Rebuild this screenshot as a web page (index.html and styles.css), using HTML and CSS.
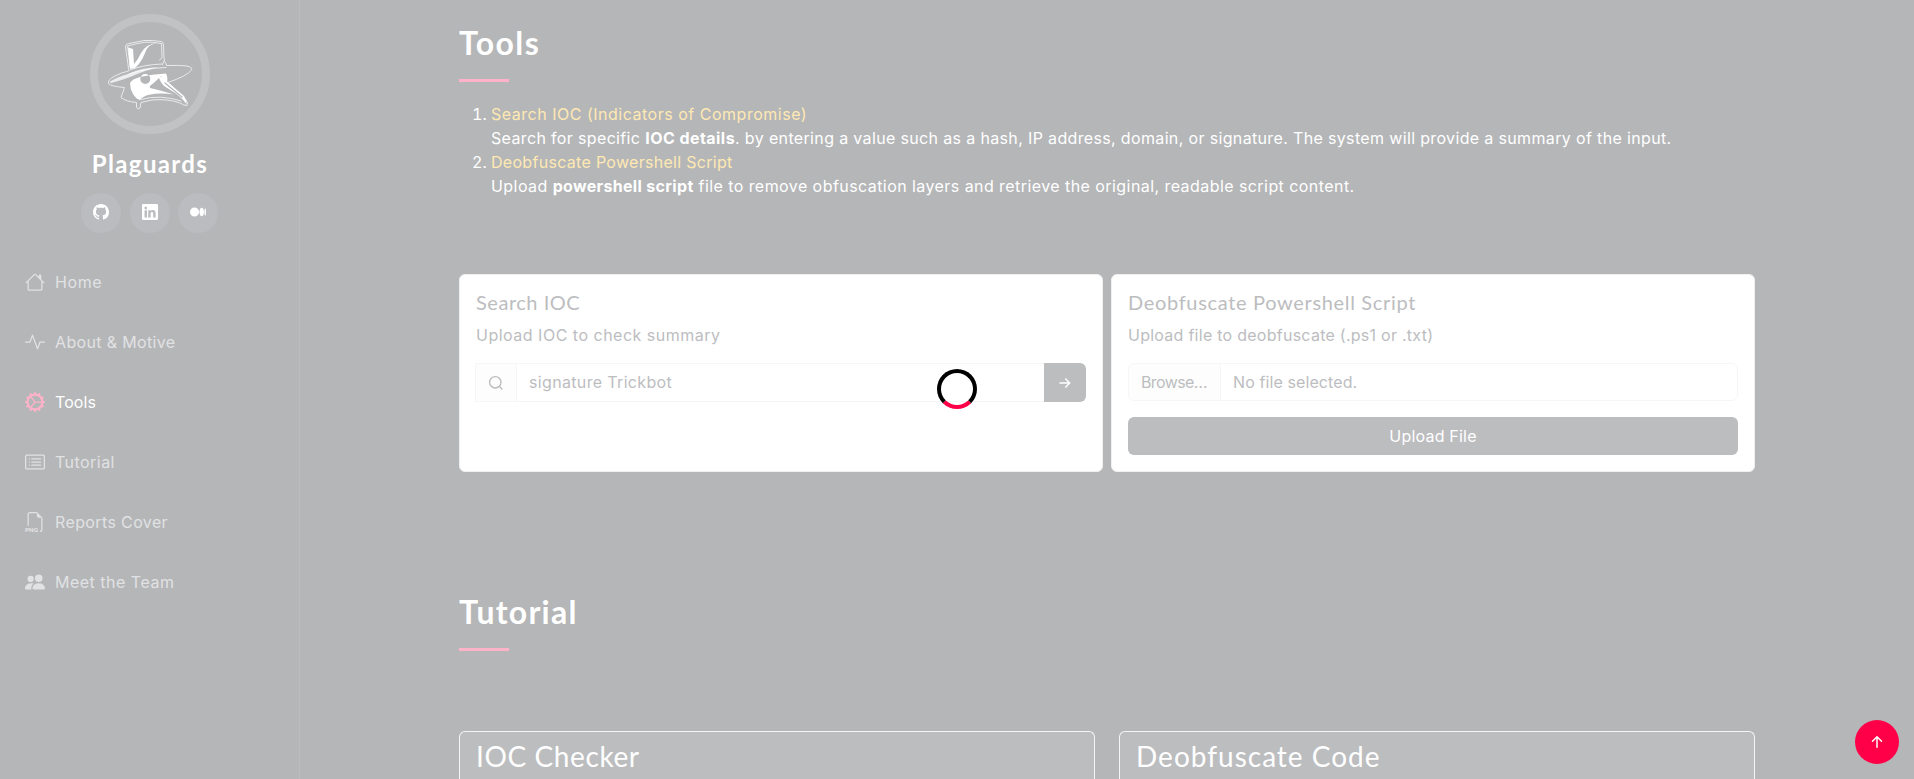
FILE: index.html
```
<!DOCTYPE html>
<html lang="en">
<head>
<meta charset="utf-8">
<title>Plaguards</title>
<link rel="stylesheet" href="styles.css">
</head>
<body>
<aside class="sidebar">
  <div class="avatar">
    <svg viewBox="0 0 140 140" width="140" height="140" fill="none" stroke-linejoin="round" stroke-linecap="round">
      <g stroke="#e9eaeb" stroke-width="1">
        <path d="M48.500 64.500C47.500 57 46.500 50 45.500 43Q45.300 40.500 48 39.800 56 38 64 36.500 73 36 81 37.500 83.500 38 83.500 41L84 54Q84 58 86 59.500L86.500 61.500Q98 61 107 62Q113 63.500 111.500 66 107 72 88 78.500L90 80.500 106 96Q108.500 99.500 107 101.500 104 101.500 100 99 88 94.500 72 96L61 98.500 60 104Q58 106 56.500 103.500L56.500 98.500Q46 97.500 41 93.500L44.500 83.500Q31 82.500 28.500 79.500 27.500 76 34 72.500Q41 68.500 48.500 67Z"/>
        <path d="M50 63Q49 52 47.500 42Q56 39.500 65 38.200 73 37.800 81.500 39.500L82 54 79.500 56M84 57 82.500 60.500M49 70Q63 64.500 86 63.500M50 66Q64 60.500 82 60M61 95.500Q80 90 101 97"/>
      </g>
      <g fill="#fff">
        <path d="M48 43.500 53 45 54 60Q58 56 61 49 66 40 77 38.700L71 41Q67 43 65 49 61 59 55 64L50 65Z"/>
        <path fill-rule="evenodd" d="M50 79Q52 75 60 73 72 70 86 69.500Q88 73 87 79L83 75 81 72 78 75Q74 79 71 81 69 82.500 70 84 80 86 94 90.500 80 88.500 68 91 62 93 60 96 56 95 53 90 50 85 50 79ZM65.300 70A5 5 0 1 0 65.300 80A5 5 0 0 0 65.300 70Z"/>
        <path d="M78 71 83 74 104 92Q107 96 106.500 100 103 95 96 89.500L84 82Q80 78 78 71Z"/>
        <path d="M48 70Q62 63.500 79 63 65 66.500 55 71 46 75 31 79L29.500 78Q36 73.500 48 70Z" opacity=".75"/>
      </g>
      <path d="M85 79 102 93" stroke="#b5b6b8" stroke-width="1.200"/>
    </svg>
  </div>
  <h1 class="brand">Plaguards</h1>
  <div class="social">
    <a><svg viewBox="0 0 16 16"><path d="M8 0C3.58 0 0 3.58 0 8c0 3.54 2.29 6.53 5.47 7.59.4.07.55-.17.55-.38 0-.19-.01-.82-.01-1.49-2.01.37-2.53-.49-2.69-.94-.09-.23-.48-.94-.82-1.13-.28-.15-.68-.52-.01-.53.63-.01 1.08.58 1.23.82.72 1.21 1.87.87 2.33.66.07-.52.28-.87.51-1.07-1.78-.2-3.64-.89-3.64-3.95 0-.87.31-1.59.82-2.15-.08-.2-.36-1.02.08-2.12 0 0 .67-.21 2.2.82.64-.18 1.32-.27 2-.27s1.36.09 2 .27c1.53-1.04 2.2-.82 2.2-.82.44 1.1.16 1.92.08 2.12.51.56.82 1.27.82 2.15 0 3.07-1.87 3.75-3.65 3.95.29.25.54.73.54 1.48 0 1.07-.01 1.93-.01 2.2 0 .21.15.46.55.38A8.01 8.01 0 0 0 16 8c0-4.42-3.58-8-8-8"/></svg></a>
    <a><svg viewBox="0 0 16 16"><path d="M0 1.146C0 .513.526 0 1.175 0h13.65C15.474 0 16 .513 16 1.146v13.708c0 .633-.526 1.146-1.175 1.146H1.175C.526 16 0 15.487 0 14.854zm4.943 12.248V6.169H2.542v7.225zm-1.2-8.212c.837 0 1.358-.554 1.358-1.248-.015-.709-.52-1.248-1.342-1.248S2.4 3.226 2.4 3.934c0 .694.521 1.248 1.327 1.248zm4.908 8.212V9.359c0-.216.016-.432.08-.586.173-.431.568-.878 1.232-.878.869 0 1.216.662 1.216 1.634v3.865h2.401V9.25c0-2.22-1.184-3.252-2.764-3.252-1.274 0-1.845.7-2.165 1.193v.025h-.016l.016-.025V6.169h-2.4c.03.678 0 7.225 0 7.225z"/></svg></a>
    <a><svg viewBox="0 0 16 16"><path d="M9.025 8c0 2.485-2.02 4.5-4.513 4.5A4.506 4.506 0 0 1 0 8c0-2.486 2.02-4.5 4.512-4.5A4.506 4.506 0 0 1 9.025 8m4.95 0c0 2.34-1.01 4.236-2.256 4.236S9.463 10.339 9.463 8c0-2.34 1.01-4.236 2.256-4.236S13.975 5.661 13.975 8M16 8c0 2.096-.355 3.795-.794 3.795-.438 0-.793-1.7-.793-3.795 0-2.096.355-3.795.794-3.795.438 0 .793 1.699.793 3.795"/></svg></a>
  </div>
  <nav class="nav">
    <a><svg viewBox="0 0 16 16"><path d="M8.707 1.5a1 1 0 0 0-1.414 0L.646 8.146a.5.5 0 0 0 .708.708L2 8.207V13.5A1.5 1.5 0 0 0 3.5 15h9a1.5 1.5 0 0 0 1.5-1.5V8.207l.646.647a.5.5 0 0 0 .708-.708L13 5.793V2.5a.5.5 0 0 0-.5-.5h-1a.5.5 0 0 0-.5.5v1.293zM13 7.207V13.5a.5.5 0 0 1-.5.5h-9a.5.5 0 0 1-.5-.5V7.207l5-5z"/></svg><span class="n1">Home</span></a>
    <a><svg viewBox="0 0 16 16"><path d="M6 2a.5.5 0 0 1 .47.33L10 12.036l1.53-4.208A.5.5 0 0 1 12 7.5h3.5a.5.5 0 0 1 0 1h-3.15l-1.88 5.17a.5.5 0 0 1-.94 0L6 3.964 4.47 8.171A.5.5 0 0 1 4 8.5H.5a.5.5 0 0 1 0-1h3.15l1.88-5.17A.5.5 0 0 1 6 2"/></svg><span class="n2">About &amp; Motive</span></a>
    <a class="active"><svg viewBox="0 0 16 16"><path d="M7.068.727c.243-.97 1.62-.97 1.864 0l.071.286a.96.96 0 0 0 1.622.434l.205-.211c.695-.719 1.888-.03 1.613.931l-.08.284a.96.96 0 0 0 1.187 1.187l.283-.081c.96-.275 1.65.918.931 1.613l-.211.205a.96.96 0 0 0 .434 1.622l.286.071c.97.243.97 1.62 0 1.864l-.286.071a.96.96 0 0 0-.434 1.622l.211.205c.719.695.03 1.888-.931 1.613l-.284-.08a.96.96 0 0 0-1.187 1.187l.081.283c.275.96-.918 1.65-1.613.931l-.205-.211a.96.96 0 0 0-1.622.434l-.071.286c-.243.97-1.62.97-1.864 0l-.071-.286a.96.96 0 0 0-1.622-.434l-.205.211c-.695.719-1.888.03-1.613-.931l.08-.284a.96.96 0 0 0-1.186-1.187l-.284.081c-.96.275-1.65-.918-.931-1.613l.211-.205a.96.96 0 0 0-.434-1.622l-.286-.071c-.97-.243-.97-1.62 0-1.864l.286-.071a.96.96 0 0 0 .434-1.622l-.211-.205c-.719-.695-.03-1.888.931-1.613l.284.08a.96.96 0 0 0 1.187-1.186l-.081-.284c-.275-.96.918-1.65 1.613-.931l.205.211a.96.96 0 0 0 1.622-.434zM12.973 8.5H8.25l-2.834 3.779A4.998 4.998 0 0 0 12.973 8.5m0-1a4.998 4.998 0 0 0-7.557-3.779l2.834 3.78zM5.048 3.967l-.087.065zm-.431.355A4.98 4.98 0 0 0 3.002 8c0 1.455.622 2.765 1.615 3.678L7.375 8zm.344 7.646.087.065z"/></svg><span class="n3">Tools</span></a>
    <a><svg viewBox="0 0 16 16"><path d="M14.5 3a.5.5 0 0 1 .5.5v9a.5.5 0 0 1-.5.5h-13a.5.5 0 0 1-.5-.5v-9a.5.5 0 0 1 .5-.5zm-13-1A1.5 1.5 0 0 0 0 3.5v9A1.5 1.5 0 0 0 1.5 14h13a1.5 1.5 0 0 0 1.5-1.5v-9A1.5 1.5 0 0 0 14.5 2z"/><path d="M5 8a.5.5 0 0 1 .5-.5h7a.5.5 0 0 1 0 1h-7A.5.5 0 0 1 5 8m0-2.500a.5.5 0 0 1 .5-.5h7a.5.5 0 0 1 0 1h-7a.5.5 0 0 1-.5-.5m0 5a.5.5 0 0 1 .5-.5h7a.5.5 0 0 1 0 1h-7a.5.5 0 0 1-.5-.5m-1-5a.5.5 0 1 1-1 0 .5.5 0 0 1 1 0M4 8a.5.5 0 1 1-1 0 .5.5 0 0 1 1 0m0 2.500a.5.5 0 1 1-1 0 .5.5 0 0 1 1 0"/></svg><span class="n4">Tutorial</span></a>
    <a><svg viewBox="0 0 16 16"><path d="M14 4.500V14a2 2 0 0 1-2 2v-1a1 1 0 0 0 1-1V4.500h-2A1.500 1.500 0 0 1 9.500 3V1H4a1 1 0 0 0-1 1v9H2V2a2 2 0 0 1 2-2h5.500z"/><text class="ext" x="-.1" y="15.900" textLength="10.600" lengthAdjust="spacingAndGlyphs">PNG</text></svg><span class="n5">Reports Cover</span></a>
    <a><svg viewBox="0 0 16 16"><path d="M7 14s-1 0-1-1 1-4 5-4 5 3 5 4-1 1-1 1zm4-6a3 3 0 1 0 0-6 3 3 0 0 0 0 6m-5.784 6A2.240 2.240 0 0 1 5 13c0-1.355.68-2.750 1.936-3.720A6.300 6.300 0 0 0 5 9c-4 0-5 3-5 4s1 1 1 1zM4.500 8a2.500 2.500 0 1 0 0-5 2.500 2.500 0 0 0 0 5"/></svg><span class="n6">Meet the Team</span></a>
  </nav>
</aside>

<main class="main">
  <section class="tools">
    <h2><span class="t1">Tools</span></h2>
    <ol>
      <li><span class="gold g1">Search IOC (Indicators of Compromise)</span><br><span class="d1">Search for specific <b>IOC details</b>. by entering a value such as a hash, IP address, domain, or signature. The system will provide a summary of the input.</span></li>
      <li><span class="gold g2">Deobfuscate Powershell Script</span><br><span class="d2">Upload <b>powershell script</b> file to remove obfuscation layers and retrieve the original, readable script content.</span></li>
    </ol>
    <div class="cards">
      <div class="card">
        <h5><span class="c1">Search IOC</span></h5>
        <p><span class="p1">Upload IOC to check summary</span></p>
        <div class="search">
          <span class="addon"><svg viewBox="0 0 16 16" width="16" height="16" fill="none" stroke="#b9babc" stroke-width="1.300" stroke-linecap="round"><circle cx="7.300" cy="7.300" r="5.700"/><path d="M11.500 11.500 14 14"/></svg></span>
          <span class="field"><span class="f1">signature Trickbot</span></span>
          <span class="go"><svg viewBox="0 0 16 16" width="16" height="16"><path d="M2.500 8H12.500M8.300 3.500 12.700 8 8.300 12.500" fill="none" stroke="#fff" stroke-width="1.400"/></svg></span>
        </div>
      </div>
      <div class="card">
        <h5><span class="c2">Deobfuscate Powershell Script</span></h5>
        <p><span class="p2">Upload file to deobfuscate (.ps1 or .txt)</span></p>
        <div class="file"><span class="browse"><span class="f2">Browse…</span></span><span class="field"><span class="f3">No file selected.</span></span></div>
        <div class="upload"><span class="f4">Upload File</span></div>
      </div>
    </div>
  </section>
  <section class="tutorial">
    <h2><span class="t2">Tutorial</span></h2>
    <div class="guides">
      <div class="guide"><span class="u1">IOC Checker</span></div>
      <div class="guide"><span class="u2">Deobfuscate Code</span></div>
    </div>
  </section>
</main>
<div class="loader"></div>
<a class="to-top"><svg viewBox="0 0 16 16" width="24" height="24"><path fill="#fff" d="M8 12a.5.5 0 0 0 .5-.5V5.707l2.146 2.147a.5.5 0 0 0 .708-.708l-3-3a.5.5 0 0 0-.708 0l-3 3a.5.5 0 1 0 .708.708L7.500 5.707V11.500a.5.5 0 0 0 .5.5"/></svg></a>
</body>
</html>
```
FILE: styles.css
```
* { box-sizing: border-box; }
body {
  margin: 0; height: 779px; overflow: hidden; display: flex;
  background: #b5b6b8; color: #fff;
  font: 16px/24px Inter, "Open Sans", sans-serif;
}
h1, h2, h5, p, ol { margin: 0; }
h1, h2, h5, .guide { font-family: Lato, "Open Sans", sans-serif; }
span { white-space: nowrap; }

.sidebar { width: 300px; height: 779px; border-right: 1px solid #bcbdbf; padding-top: 14px; flex: none; }
.avatar { width: 120px; height: 120px; margin: 0 auto; border: 8px solid #c1c2c4; border-radius: 50%; display: flex; align-items: center; justify-content: center; }
.avatar svg { flex: none; }
.brand { font-size: 24px; line-height: 29px; font-weight: 700; text-align: center; margin-top: 15px; letter-spacing: 1.35px; text-indent: 1px; }
.social { display: flex; justify-content: center; gap: 8.600px; margin-top: 15px; }
.social a { width: 40px; height: 40px; border-radius: 50%; background: #bbbcc0; display: flex; align-items: center; justify-content: center; padding-bottom: 2px; }
.social svg { width: 16px; height: 16px; fill: #fff; }
.nav { padding: 19px 25px; }
.nav a { height: 60px; display: flex; align-items: center; gap: 10px; color: #e1e2e4; }
.nav svg { width: 20px; height: 20px; fill: #e1e2e4; overflow: visible; }
.nav .active { color: #fff; }
.nav .active svg { fill: #ffb2c8; }
.ext { font: 700 5px Roboto, sans-serif; }
.n1 { letter-spacing: .6px; }
.n2 { letter-spacing: .35px; }
.n3 { letter-spacing: .1px; }
.n4 { letter-spacing: .45px; }
.n5 { letter-spacing: .38px; }
.n6 { letter-spacing: .5px; }

.main { width: 1296px; margin-left: 159px; flex: none; }
h2 { font-size: 32px; line-height: 38px; font-weight: 700; padding-bottom: 20px; }
h2::after { content: ""; display: block; width: 50px; height: 3px; background: #ffb2c8; margin-top: 17px; }
.t1 { letter-spacing: 1.4px; }
.t2 { letter-spacing: 1.25px; }
.tools { padding-top: 24px; height: 568px; }
.tools ol { padding-left: 32px; }
.gold { color: #ffe9b3; }
.g1 { letter-spacing: .51px; }
.g2 { letter-spacing: .3px; }
.d1 { letter-spacing: .35px; }
.d1 b { letter-spacing: .45px; }
.d2 { letter-spacing: .435px; }
.d2 b { letter-spacing: .33px; }
.cards { display: flex; gap: 8px; margin-top: 76px; }
.card { flex: 1; height: 198px; background: #fff; border: 1px solid #f0f0f1; border-radius: 6px; padding: 15px 16px 16px; color: #bcbdbf; }
.card h5 { font-size: 20px; line-height: 24px; font-weight: 400; margin-bottom: 9px; }
.c1 { letter-spacing: .53px; }
.c2 { letter-spacing: .67px; }
.p1 { letter-spacing: .5px; }
.p2 { letter-spacing: .26px; }
.search { display: flex; height: 39px; margin: 16px 0 0 -1px; }
.addon { width: 42px; border: 1px solid #f6f6f7; background: #fdfdfd; display: flex; align-items: center; justify-content: center; }
.field { flex: 1; display: flex; align-items: center; padding-left: 12px; }
.search .field { border: 1px solid #f6f6f7; border-width: 1px 0; padding-bottom: 1px; }
.f1 { letter-spacing: .34px; }
.f2 { letter-spacing: -.6px; }
.f3 { letter-spacing: .1px; }
.f4 { letter-spacing: .2px; }
.go { width: 42px; background: #bcbdbf; border-radius: 0 6px 6px 0; display: flex; align-items: center; justify-content: center; }
.file { display: flex; height: 38px; margin-top: 16px; border: 1px solid #f6f6f7; border-radius: 6px; overflow: hidden; }
.browse { width: 92px; padding-left: 12px; background: #fdfdfd; border-right: 1px solid #f6f6f7; display: flex; align-items: center; }
.upload { height: 38px; margin-top: 16px; border-radius: 6px; background: #bcbdbf; color: #fff; display: flex; align-items: center; justify-content: center; }

.tutorial { padding-top: 25px; }
.guides { display: flex; gap: 24px; margin-top: 60px; }
.guide { flex: 1; height: 48px; border: 1px solid #f5f5f6; border-bottom: 0; border-radius: 6px 6px 0 0; background: #bcbdbf; padding: 7px 16px 0; font-size: 28px; line-height: 34px; }
.u1 { letter-spacing: .6px; }
.u2 { letter-spacing: 1px; }

.loader { position: absolute; left: 937px; top: 369px; width: 40px; height: 40px; border: 4px solid #000; border-bottom-color: #ff0048; border-radius: 50%; }
.to-top { position: absolute; right: 15px; bottom: 15px; width: 44px; height: 44px; border-radius: 50%; background: #ff0048; display: flex; align-items: center; justify-content: center; }
```
